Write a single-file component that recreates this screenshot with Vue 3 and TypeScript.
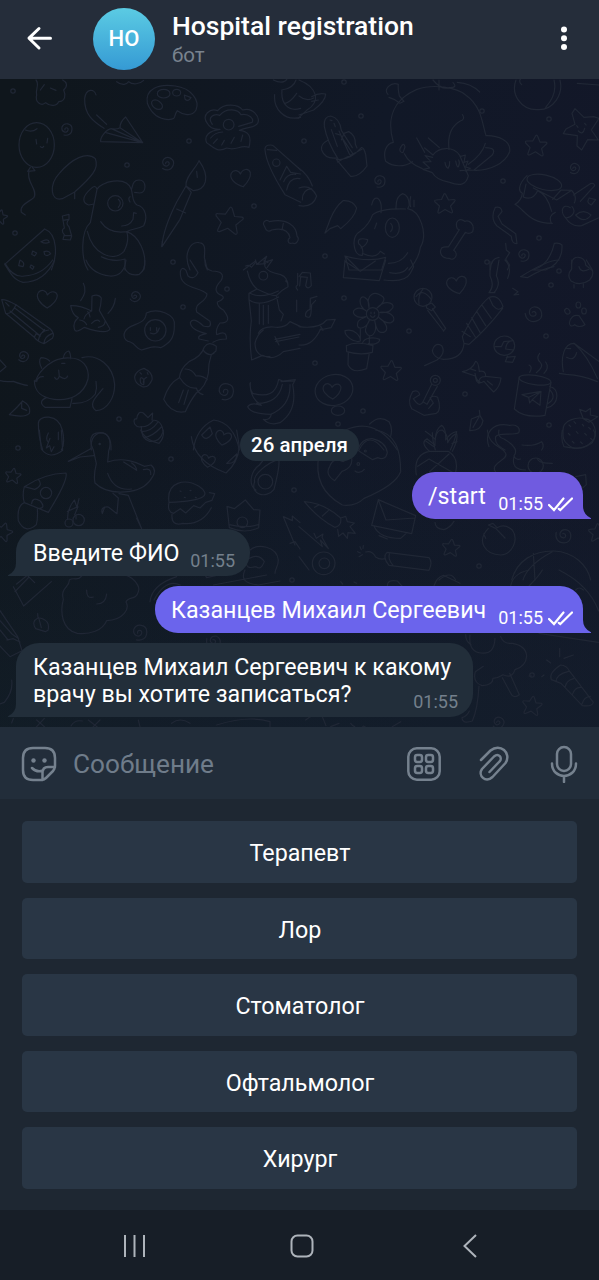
<script setup lang="ts">
interface Message {
  id: number
  lines: string[]
  time: string
  out: boolean
  kind: string
}

interface Mark {
  x: number
  y: number
  s: number
  r: number
}

const messages: Message[] = [
  { id: 1, lines: ['/start'], time: '01:55', out: true, kind: 'command' },
  { id: 2, lines: ['Введите ФИО'], time: '01:55', out: false, kind: 'prompt' },
  { id: 3, lines: ['Казанцев Михаил Сергеевич'], time: '01:55', out: true, kind: 'name' },
  { id: 4, lines: ['Казанцев Михаил Сергеевич к какому', 'врачу вы хотите записаться?'], time: '01:55', out: false, kind: 'question' },
]

const doctors: string[] = ['Терапевт', 'Лор', 'Стоматолог', 'Офтальмолог', 'Хирург']

const mark = (x: number, y: number, s = 1, r = 0): Mark => ({ x, y, s, r })

const stars: Mark[] = [
  mark(229, 221, 1.35, 10), mark(536, 146, 1.05, 5), mark(445, 204, 1, 0), mark(391, 371, 1, 5),
  mark(13, 476, 0.75, 10), mark(451, 548, 0.85, 8), mark(532, 706, 0.95, 10), mark(598, 533, 0.9, 0),
  mark(3, 532, 0.9, 20), mark(0, 217, 0.7, 15),
]
const hearts: Mark[] = [
  mark(241, 178, 1, -8), mark(47, 299, 1, 5), mark(457, 285, 1, -10), mark(332, 391, 0.9, 0),
  mark(223, 438, 0.8, 15), mark(208, 461, 0.7, 10),
]
const spirals: Mark[] = [
  mark(66, 129, 1, 0), mark(167, 163, 1.1, 20), mark(379, 181, 1, 0), mark(574, 168, 0.9, 20),
  mark(135, 296, 0.9, 40), mark(23, 356, 0.9, 30), mark(225, 391, 1.4, 0), mark(534, 313, 1.4, 70),
  mark(523, 255, 1, 0), mark(564, 535, 1.3, 90), mark(139, 632, 1.3, 0), mark(214, 641, 1.2, 90),
  mark(498, 722, 1, 30),
]
const dots: Mark[] = [
  mark(13, 91), mark(189, 141), mark(127, 165), mark(254, 206), mark(15, 233), mark(173, 262), mark(361, 116),
  mark(304, 141), mark(482, 111), mark(549, 119), mark(503, 181), mark(325, 256), mark(539, 238), mark(487, 262),
  mark(227, 289), mark(183, 307), mark(119, 419), mark(551, 285), mark(409, 331), mark(546, 336), mark(315, 363),
  mark(363, 411), mark(338, 424), mark(465, 394), mark(549, 425), mark(559, 271), mark(18, 448), mark(171, 459),
  mark(294, 490), mark(479, 566), mark(344, 82), mark(344, 298), mark(532, 675), mark(292, 580),
]
</script>

<template>
  <main class="screen">
    <header class="topbar">
      <svg class="back" viewBox="0 0 28 28" aria-hidden="true">
        <path d="M24.500 14.200H3.500M13 4.500 3 14.200 13 24" />
      </svg>
      <div class="avatar">НО</div>
      <div class="heading">
        <h1>Hospital registration</h1>
        <p>бот</p>
      </div>
      <svg class="more" viewBox="0 0 8 28" aria-hidden="true">
        <circle cx="4" cy="5.500" r="3" /><circle cx="4" cy="14.300" r="3" /><circle cx="4" cy="23" r="3" />
      </svg>
    </header>

    <section class="chat">
      <svg class="doodles" viewBox="0 79 599 648" aria-hidden="true">
        <defs>
          <path id="star" d="M-1-10Q0-11 1-9L3.500-4 9-4.500Q11-4 9.500-2.500L5.500 2 7.500 7.500Q7.500 9.500 5.500 8.500L0 5.500-5.500 9Q-7.500 9.500-7 7.500L-5.500 2-10-2Q-11-4-9-4L-3.500-4.500Z" />
          <path id="heart" d="M1 9C-7 5-12-1-9-6-6-10-1-8 0-4 3-9 9-9 10-4 10 2 5 6 1 9Z" />
          <path id="spiral" d="M-1 1C-2-2 3-2 2 1 1 5-5 3-4-2-2-7 6-6 6 0 6 5 2 7-2 6" />
        </defs>

        <g transform="translate(0 80) scale(.33333)">
          <path d="M108 0C120 14 105 28 110 45 104 66 124 80 137 68 152 80 171 78 176 65 196 64 198 45 191 30 205 17 200 6 188 0M121 30l12-16M151 24l17 7M350 5c18 14 30 8 36 0 12 10 33 8 45-4" />
          <ellipse cx="110" cy="195" rx="53" ry="67" />
          <path d="M91 262l-8 12 22-2-8-10M87 274C77 305 115 329 102 352 91 364 57 374 64 397l12 8M76 150q20 8 35-4M108 178l2 14M143 175l-2 14M121 200q6 6 10-1" />
          <path d="M288 45C284 26 258 24 254 55 252 104 280 125 312 145M290 105l30 28M302 185C300 170 320 148 334 146L428 188ZM334 146q16 3 26-3 0-18 17-32L428 188M360 143 428 188M318 158 428 188" />
          <path d="M442 70C434 26 477 10 526 18 575 25 600 62 588 90 575 112 548 104 532 92 518 111 532 117 505 119 469 117 450 91 442 70Z" />
          <ellipse cx="491" cy="41" rx="19" ry="13" /><ellipse cx="471" cy="74" rx="18" ry="12" transform="rotate(35 471 74)" /><ellipse cx="530" cy="38" rx="12" ry="10" /><path d="M553 45l20 8q-9 14-18 4Z" />
          <path d="M622 130C603 105 631 83 653 92 672 68 715 72 728 90 758 81 782 111 773 130 762 145 742 140 718 151 748 154 755 170 747 202 720 193 710 214 680 204 650 221 633 195 620 188 611 168 627 152 660 148 641 149 628 143 622 130Z" />
          <path d="M637 133C620 111 643 100 659 106 680 81 715 88 723 104 748 99 763 118 756 127L716 139M632 174q13-17 36-18M640 190l12-13M665 195l8-14M693 190l10-18M723 184l5-19" /><circle cx="686" cy="134" r="16" />
          <path d="M820 0C850 15 860 0 862-5M824 44C820 83 850 125 902 112M846 30C842 70 865 97 902 85M845 30Q880 26 888 0M855 70q18-5 35-30" />
          <path d="M187 356C149 366 148 312 178 280 216 236 260 213 286 236 298 265 276 290 224 336L187 356M224 336v20" />
          <path d="M291 328C301 306 378 285 394 328 400 350 396 366 411 375 437 381 444 413 431 437 414 448 395 446 380 455 346 460 319 451 302 425M291 328 271 428C241 455 243 537 264 570M380 455C415 466 444 520 431 570M291 328q-4-16-18-2c-30 26-25 43-7 49l16-3M394 330c5-16 5-30 23-30 23 0 24 38 2 39l-15-2M262 454C278 520 338 550 372 514 384 491 386 472 380 455M304 530Q340 548 375 537V570" />
          <circle cx="346" cy="370" r="23" /><path d="M355 358q12 10 0 24M390 350q-7 5 0 16M365 438q24 0 34-20l2-20 8 2M187 408l20-5v15q-12 12 0 22l8 28-4 12-22-2 4-14q-12-14 0-20ZM189 421l18-3M193 466l22 1" />
          <path d="M597 242C590 263 554 291 558 318L580 332C616 330 634 294 597 242M558 318 574 337 540 418 486 500Q488 450 530 366L558 318M530 387l27 12M485 500l2-17M590 274l2 18" />
          <path d="M795 210C793 194 813 192 822 199L902 270M795 210Q799 256 855 344L902 367M802 209l28 2M840 300l20-41 12 18 30 5M851 305q11-25 36-22M860 330q8-40 40-34" /><circle cx="829" cy="248" r="11" />
          <path d="M793 438C784 426 800 416 808 425 862 412 890 440 891 468 901 479 888 495 878 489 864 495 860 479 870 473Q863 440 815 450 801 461 793 438ZM850 430l-4 20" />
          <path d="M134 447C174 462 172 530 154 570M134 447 14 553l12 17M123 485q22-12 25 2-12 6-25-2M60 540q16 7 9 20l-13-3ZM98 513l12 6-6 9-9-5ZM132 515q14-5 20 6-10 10-18 3Z" />
          <path d="M570 570C548 522 571 483 598 488 617 491 615 508 613 532L622 570M730 570l37-27 4 10 29-24-8 19 26-9-17 24M770 553l27-2" />
        </g>

        <g transform="translate(299 80) scale(.33333)">
          <path d="M0 0Q41 16 49 45 55 71 23 91L-3 115M0 48Q22 66 44 54M38 50q22-13 42-8 0 21-36 48L0 105M38 64l20-4" />
          <path d="M76 139Q73 110 95 108 122 114 127 151L160 203M76 139Q84 185 118 238M97 149l18 50M120 153l31 69M127 170l35 52M127 180l8-20 14-5q21 10 20 38l5 11M88 180q-25 13-20 30 10 28 45 24M112 238q40 5 75-35 7-3 13 20l4 35q-24 34-49 31L112 238M115 246l74-38M151 222l5 7M93 120l6 2M105 130l4 10M110 161l13 4" />
          <path d="M283 187C261 112 286 58 352 29 402 10 474 22 500 45 549 80 549 130 561 167M267 43C251 27 277 5 298 13 296 30 300 38 301 48L315 64 303 70 285 58 270 52M283 187C260 191 252 218 260 244 283 263 319 260 340 245M303 206q11-23 15-5l-6 17q-11-1-9-12M316 221Q330 250 370 266M450 208C445 164 459 137 484 123 494 121 497 112 490 104M561 167C595 166 637 181 632 215 619 248 573 277 513 270L483 272M508 253Q551 222 559 190M560 203q35 1 19 23L526 269M402 0q25 31 50 23 25 0 10-15M420 0v30M475 7q42 3 67 29" />
          <path d="M353 174l24 43M388 174l33 29M377 204l25 21C418 202 462 196 482 226L508 287Q500 326 452 307 412 300 400 278l-28-10 20-4-20-18 24-1-18-18 23 5M438 247q2 14 9 18 6-7 5-20M470 243q4 20 8 17 6-11 1-20M483 230l16-5-4 22 12-4-7 18 14 4-15 8" />
          <path d="M651 0C635 42 665 92 718 89 763 90 794 43 783 0M668 14q-15-14 8-25M740 82Q776 41 765 0M835 10l65 5" />
          <path d="M828 86 855 112 884 110 900 115 877 150 898 180 866 179 848 210 834 198 835 167 793 161 801 147 828 133 819 100ZM833 137l4 5M857 130l4 5M838 153q14 14 19-8" />
          <ellipse cx="736" cy="307" rx="53" ry="22" transform="rotate(13 736 307)" />
          <path d="M684 287Q665 305 662 322q-2 13 8 18-2 21-22 33C679 391 690 430 760 430M681 312l-8 39Q701 363 716 332q29 12 42 62M703 324l70 36 45-29-32-1-25 28M818 331q17 18 8 38M823 345l51-34q11-4 13 6L844 364M814 383c-28-16-30 18-13 31 21-3 31-21 18-34M870 354l20 5-13 16q-17-7-6-21M800 414q18 28 48 23l50-23M830 405q24-20 46 0-20 28-46 0M757 430q-10-24 12-33" />
          <path d="M-2 263Q29 285 40 318M0 324q35-13 53 24-11 36-53 29M10 360q0-32 28-34M132 362q30-2 41 22-5 28-48 62l-9-9-23 9-15 13 16-42q15-37 38-55M218 375q4-23 18-20 14 10 10 43M291 385q-1-36 20-44 19 5 20 35l-5 10C363 392 388 461 364 502 360 534 343 555 330 570M221 404Q245 385 320 387M221 404Q210 434 185 453q-21 12-20 38 3 37 25 35 6-22-11-35-6-21 27-12 0 13-20 25M190 520q40 19 54-6M268 550q40 0 58-32M138 528q70 20 122 4l-12 38H150ZM138 528l42 42M244 514l12 8" /><ellipse cx="280" cy="443" rx="21" ry="29" /><path d="M275 430q11 11 0 25M233 429l-6 17M335 350q-4 20 0 30M345 360v20" />
          <path d="M475 446C465 422 484 413 497 424 511 419 528 432 521 455 512 462 505 461 499 457L464 511C480 520 468 546 450 535 431 535 418 521 428 504 435 499 446 501 448 501L481 449Z" />
          <path d="M589 382q18-4 20 13l-12 14 12 23 41 29 4 30q-16 1-17-22l-44-32q-20-23-4-55M766 490q15-3 23 5Q792 548 740 570H700Q750 559 766 490M620 490l2 20 10 8-12 19 12 18-7 15M574 570q1-35 26-38M818 550c0-26 42-24 42 5l18 15" />
        </g>

        <g transform="translate(0 260) scale(.33333)">
          <path d="M15 10Q40 54 73 48 126 45 158 0M15 10q22 51 54 57Q133 67 164 0M93 15l9 5-4 8-8-7ZM258 0Q275 42 330 48 372 50 378 0M374 25q12 25 44 18 20-15 16-43" />
          <path d="M5 119q11-2 43 15L151 207Q166 222 157 235L132 251Q112 244 103 232L17 160 5 119M17 160q18 4 31-26M17 128l10 10M30 153l91 75M43 143l91 69M103 232l5-11 11 5 15-18M115 241q4-28 31-31M132 249q2-20 25-29" />
          <path d="M212 137q28-1 63 16l1-45q19-8 28 6-1 22-6 37l32 56q-11 18-77-5-28 20-30 4-5-20 12-33-18-7-23-36M239 180q15 2 21 14M275 153q-20 9-23 24M263 155q5 5 7 16M250 70q13 24-8 52M346 115q-2 25-22 45M275 190q15-15 24-6M295 202q20-4 20-17" />
          <path d="M439 159C474 143 528 162 523 197 524 238 505 251 482 263 458 256 449 264 424 270 410 268 407 251 391 246 367 241 367 217 385 204 403 190 437 192 439 159Z" /><circle cx="466" cy="211" r="32" /><path d="M451 203v8M470 203v10M451 219q20 9 27-15" />
          <path d="M570 0 594 38q-12 24-30 10l-6-17q-13-13-17 4C537 88 600 79 621 102 619 130 581 126 590 156L630 184Q637 206 610 198 581 170 571 187 571 210 619 221 591 226 597 237L625 243M615 0Q613 29 636 33 679 34 663 62 635 91 660 104 683 113 652 126 650 139 671 151 700 189 660 189 646 207 650 224 681 209 679 237 655 237 639 247" />
          <path d="M613 261q14-19 36-2l-1 14-14 11Q625 310 625 340q-7 40-36 59Q572 420 556 455 514 463 491 418 505 370 538 353 541 325 567 305 604 290 613 261M609 270q17 21 33 10M555 327q21-1 33 21 19-3 34 11M540 354q20 33 49 30 4 15 20 20M550 390l-14 38M565 390l-13 43" />
          <path d="M106 364C118 330 158 290 210 294 247 294 269 320 264 357 252 404 210 424 163 418 122 412 104 395 103 362ZM125 325q-11-23-2-32 16 0 26 10M190 295q2-19 16-22 6 6 6 23M246 293C294 280 340 318 344 374 344 411 324 450 288 452 262 433 290 409 309 386M218 430Q265 432 286 402q6-18 2-38M139 413q-27 12-4 29h75l6-26M130 350q-17-1-20 15M164 352q8 13 14-3 20 14 25-1M178 349l-2-19M185 310h10" />
          <path d="M404 350q4-18 28-25 28 13 24 34-10 25-29 21-24-10-23-30M420 338l4 4M442 338l2 5M421 356q-2 18 10 18 4-20-8-21M440 352q-10 5-10 15M0 300l18 20-18 15M0 362q15 4 40 2 29 11 42 12M68 423q26 14 20 37-14 14-60 4 22-20 40-41M65 427v18l15 6M115 490C115 465 175 459 187 510 194 540 190 561 184 570M115 490q0 40 13 80M145 519q-10 20 0 27M175 516v23" />
          <path d="M737 18q12-5 17 4l12-14q2-6 0-8M742 33Q750 70 771 87L747 100V119Q752 160 754 183C747 230 750 262 755 300M771 87Q820 111 830 106 844 90 864 80 865 53 842 44 800 35 795 20l-3-20 12 8M750 100q35 17 85-7M747 119q30 24 89-8M778 132v60M790 136v58M805 136v54M830 110l8 40 12 13-7 20M775 220Q785 199 820 201 854 206 870 185L902 200M765 250Q770 225 790 210M755 300l33-14Q821 304 850 275l50-10M765 250q0 42 45 40M825 230l12 25M825 238l75-15M827 245l70-14M857 63l6 5" /><circle cx="790" cy="47" r="13" />
          <path d="M893 40v35q-10 5 0 15M890 120v35M750 370q-1 18 8 30 68 20 78-42l12 5 38-4-8 15Q894 452 840 488q-30 10-50-10 20 4 24-15-60 0-71-23 10-15 41-4-36-23-33-68M770 430q65 1 77-57M812 463q60-25 58-89M843 365l40-2" />
          <path d="M430 459q-16-9-20 18-12-2-6 15 8 12 20 8-2 35 25 44 30 3 40-28-2-36-33-36l2-21-14 14ZM425 500q18 2 35-18M424 515q30 0 50-29M432 533q25-3 52-32M580 570q8-65 61-90 60 7 77 90M605 525q12 22 32-4l-7-20-25 24" />
          <path d="M274 570q-5-42 26-52 35 0 33 52" />
        </g>

        <g transform="translate(299 260) scale(.33333)">
          <path d="M138 0 133 53 241 62 260 0M140 5l44 29 45-31M255 60q63 9 79-20l10-20-9-20M272 38q38 8 54-15M0 50l10-13 24 2 3 38q-11 13-17 0l5-25-20-2-3 28M34 140V115l20-6M34 115l-1 33q-16 6-13 21 15 9 16-11l2-24 12-13" />
          <circle cx="221" cy="162" r="19" /><path d="M210 144C200 100 227 90 253 112 259 119 249 134 233 145 262 114 297 133 276 149 268 161 242 157 242 157 285 153 294 182 276 188 259 192 244 177 238 171 276 199 265 220 245 217 230 214 229 187 227 182 239 225 210 238 202 219 193 209 208 187 212 179 202 209 170 212 176 190 175 176 202 174 202 169 172 179 153 157 169 148 184 137 203 154 203 154 174 136 181 104 197 112 210 118 211 137 210 144M216 156v5M226 156v5M214 167q8 10 14 0M184 208v35M211 229v22M184 243C166 250 136 228 138 212 167 203 185 230 184 243M191 248C196 233 224 230 242 238 242 251 222 255 208 251M142 257q30-15 80 0l-2 20q-35 10-77-2l-1-18M148 278 147 314q14 29 56 12l8-47" />
          <circle cx="372" cy="112" r="27" /><path d="M351 110q20-28 46 9M360 133q-4-29 13-47M381 136l17-7 11 12-11 11-15-8ZM386 151l48 62M400 146l40 59-7 8" />
          <path d="M490 230Q530 146 570 112M510 253Q560 210 611 145M570 112q30-10 42 28-12 17-30-3l-12-25M490 230l5 20 15 3M489 214l25 16M503 190l26 41M518 173l25 44M533 154l27 43M550 137l27 38M495 250q-4 48-62 48-29-4-33-25 7-28 28-16 14 22-14 43l-37 17M570 98q18-21 3-50V5M585 98q22-24 7-51L600 0M570 98h18M618 0q22 22 8 55M641 85l16 10-12 10 14-2" />
          <path d="M665 50Q745 0 780 0M665 50l20 3Q735 24 765 20M818 0v27q-16 18-2 36 28 17 56-3 18-20 2-40l-12-20M840 20q5 20 30 8M825 74v10M853 72v10M0 200q60 8 83-20l26-2-13 25-34 7M0 255q40 5 65-48M65 199l7 12" />
          <ellipse cx="838" cy="135" rx="7" ry="9" /><ellipse cx="805" cy="154" rx="7" ry="9" transform="rotate(-40 805 154)" /><ellipse cx="855" cy="153" rx="7" ry="9" /><path d="M811 189q5-27 29-22l18 27q-17 11-31 0-14 10-16-5" />
          <ellipse cx="616" cy="257" rx="31" ry="29" /><path d="M589 260h18l7-15 18-2M642 242q-20 0-22 25l24 3M622 292l27-3-8 18-22-2 7-17" />
          <path d="M490 335q30-5 40-31 8 0 11 30 20-3 19 15l46 5q-3 27-22 42-16-16-29-32-23 15-26-16l-39-13M528 340q3 21 16 27M558 350q-20 0-18 20M513 326l17 6M565 363l15 12" />
          <ellipse cx="708" cy="360" rx="48" ry="14" transform="rotate(8 708 360)" /><path d="M661 350 646 447q31 29 92 19L756 368M752 379C783 385 781 433 745 443M754 391q20 24-8 40M669 404l57-10-3 42-23-17-8 10-3-17-20-8M690 412l36-18-26 25M690 315q12 5 2 22M722 280q-12 15 2 27 12 13-12 31M740 306q12 17-5 34" />
          <path d="M793 335C784 290 796 250 825 250L899 304M781 340l20 3Q850 345 895 365M825 250Q865 285 895 355M803 292q22 13 30-14M803 265l12 1" />
          <ellipse cx="105" cy="390" rx="57" ry="46" transform="rotate(-12 105 390)" /><ellipse cx="117" cy="452" rx="20" ry="14" />
          <circle cx="409" cy="361" r="15" /><circle cx="409" cy="361" r="6" /><path d="M398 373 372 425 384 433 415 379M372 425q-10 20-29-9l19-12q-3-16-21-9-17 28-3 51l37 20 37-6q17-10 4-48-12-7-23 1l10 16-14 16" />
          <path d="M541 451l2 16-26 10-5 35q35 1 40-30l-9-15M540 471l-18 31M212 492q28-29 58-7 12 20 5 44M140 510Q230 470 295 570M180 570q30-60 75 0M400 518q0 25 9 52M379 514q12 8 30 24M409 538q0-30 19-42 14 10 12 44M440 540q14-22 33-25M473 515q-4 23-19 55M405 560l-25-17M459 550l15-5M570 560C555 520 580 486 632 496 655 491 665 506 659 518 640 528 600 515 590 530 586 550 600 560 618 570M669 555q34 5 59-10 9 13 0 25" />
          <path d="M792 512C790 480 835 470 857 476 886 479 900 519 880 548 862 560 831 576 808 555 789 541 792 525 792 512ZM853 476l-11-28 18 7 14-10v20l22 5-26 17-17-11" /><path d="M810 495l5 5M825 485l5 5M850 493l4 5M869 502l5 5M808 520l5 5M832 515l5 5M857 520l5 5M875 535l5 5M820 544l5 5M845 546l5 5" />
        </g>

        <g transform="translate(0 430) scale(.33333)">
          <path d="M118 0l6 57q26 34 64 4L184 0M150 25l-11 29 10-7 5 18 8-15M422 0q13 31 55 40 16-16 13-40M574 20q10 75 104 109Q714 98 718 50L710 0M680 100l30-28q0 30-30 28" />
          <path d="M280 60C261 21 280 7 299 9 324 5 337 33 326 63L323 96C368 80 412 96 433 109L453 105Q470 118 459 138 439 177 390 184 320 194 285 159 280 137 289 101ZM272 56 205 94 240 81 281 77M323 130Q342 184 395 177M371 96l39 25q-2-14-15-22M430 119q24-7 22 14M339 190l16 14-4 47-26-20q-25-2-18 20M314 231l-7 20M357 191l28 5 40 100M410 265l15 31" /><circle cx="299" cy="42" r="2" />
          <path d="M73 170Q132 131 198 129 205 150 145 247L73 218Q66 197 73 170M73 170l31 8q27-11 11-30M95 221q2-22 26-8 17 21-3 22M73 218Q50 228 55 272q21 42 54 12 5-17 3-48" /><circle cx="138" cy="189" r="17" />
          <circle cx="236" cy="270" r="17" /><circle cx="207" cy="279" r="12" /><path d="M203 268q-2-30 20-58l8 22 6-26M202 244l32-14-10 24M228 267v-10" />
          <path d="M507 217C498 153 557 145 597 169 630 193 626 212 507 217ZM507 218q-6 28 14 32l20-14 16 13 24-22 19 7 17-17 19-6 8-20-16-3M516 253q-3 37 33 27 57 6 85-47M540 183l3 1M570 181l3 1M586 202l3 1M553 202l3 1" />
          <path d="M681 229l22 7 33-26 25 29 19 1-4 53q-41 20-88 0ZM688 284q48 12 87 0" /><circle cx="727" cy="277" r="16" />
          <path d="M753 150q4-31 25-45l18-22M764 155C758 136 798 100 836 88 841 103 829 151 822 178 799 208 749 194 764 155M753 150q0 21 15 30" /><circle cx="796" cy="155" r="22" />
          <path d="M850 260l27 12v-14l23 20M850 260l35 85M870 340l15-5 15 22M750 360c23-20 80-12 85 30 0 20-10 25-10 40M740 390q34-24 53 5-10 27-25 15-35 10-28-20" />
        </g>

        <g transform="translate(299 430) scale(.33333)">
          <path d="M60 75q-20 100 70 150 40 5 65-20 95-40 110-80C305 60 290 10 230 0M92 110q10-30 40-15l25-17q8 34-28 46l-22 28q-30-18-15-42M176 60q12-36 44-34 40 9 45 42-5 25-29 15l-15 6q-30-18-45-29M168 123q14 11 28-5" /><circle cx="199" cy="63" r="3" /><circle cx="178" cy="102" r="4" />
          <path d="M392 64Q362 38 384 26l24 20Q407 0 430 0q18 15 16 38 14-24 27-27 5 18-13 53M352 135Q342 73 392 64h56q32 20 22 62M356 109l34-22 70 40M392 125l58-53M565 0C570 50 610 48 620 70 630 90 570 100 590 126M600 0q-5 23 15 27 48 28 30 50 4 14 20 10M645 80q-10 40 35 40M715 85c5 15 25 15 45 15M830 140l30-6 2 30-22 20M790 0q-5 30 5 50 53 12 78-10 24-20 10-40" /><circle cx="710" cy="107" r="23" />
          <path d="M16 215Q75 219 125 264 129 288 107 292 57 265 16 215M47 232l13-8M70 258l18-16M125 264l15-5 5 16 21 4-13 11 16 20-22-2-2 17-13-16-13 10-3-20" />
          <path d="M238 209 350 257 338 311 218 286ZM238 209 261 270 348 264M226 290q16 35 79 35l19-17M240 317l25 10M408 277q0 20 27 22 19-7 30-25" />
          <path d="M0 290l70 60-6-20 24 26-19-34 3-10-20 13-7-15M0 380l30 40" /><circle cx="74" cy="400" r="34" /><circle cx="76" cy="400" r="16" />
          <path d="M264 367 390 383Q402 396 390 421L270 406Q249 380 264 367M272 369q-7 18 10 37M260 386q-18 4-30-5-11-21-30-15M176 365l8 4M183 350l4 9M193 347l-1 8M180 380l10-6" />
          <path d="M568 295C530 335 560 374 605 375 640 374 660 328 640 300 615 278 597 292 594 293L582 280 568 285 590 295 618 324M560 325l-6-13" />
          <path d="M638 450C655 390 705 362 765 363 825 366 865 405 875 450M703 370l5 80M760 365q-75 40-88 85M420 450q35-30 50 0" />
        </g>

        <g transform="translate(0 570) scale(.33333)">
          <path d="M40 50 71 108 154 35M50 42l32-26 22 22M45 65l42-44M0 122 53 200 66 242 30 260-2 226M0 152l36 40 20 14M20 210l20-4 20 10M0 180l24 30" />
          <path d="M190 88C180 54 210 50 208 30 220 20 235 34 243 20 260 0 275 15 290 10 310 0 325 12 340 15 380 0 425 42 415 65 409 92 385 78 378 96 390 117 370 150 320 152 307 182 270 194 232 190 185 180 180 125 190 88ZM260 60q-1 28 20 21M320 72q-3 30-30 30M113 131l1 13Q93 154 107 176l29 9 8-4q8-29-24-37M116 143l8 30M450 95Q455 45 530 20M462 90q35-65 79-45M570 15l38-12 12 20 30-7M735 0q-20 40 40 45l65-12M640 45l160-30" />
          <path d="M35 330q5 35-22 67l-13 5M40 445l-5 14M110 450l23 20M133 445l-25 27M213 468q10-19 34-15M265 450l38 30M300 450l-35 35M415 450l6 25M515 460q25-20 55 0M650 465q95-30 160-10v18" />
        </g>

        <g transform="translate(299 570) scale(.33333)">
          <path d="M125 35l6 7M165 36l8 4M265 48q0-21 30-15l15 16M405 48q8-26 28-32l50 24M635 48C640 20 665 5 690 0M690 48q30-30 40-48M780 0q90 45 119 123M830 60q10-12 23 0M720 190 898 217" />
          <path d="M513 195q-5 50 33 54 40 6 42-44M500 194q0 20 16 30M605 200q8 23 35 20 41 7 43 38-2 31-35 41-9 28-36 15-15 10-30 11 0 21-33 22-29-10-20-42l24-16M610 323l23 43q10 23 28 8L632 310M540 348q-4 70-20 105-30 10-31-10 15-4 22-20" />
          <path d="M757 329Q748 309 785 285q18 1 27 19l71 93q-4 14-33 10l-64-67-29-11M771 335q0-22 38-31M798 352q4-21 26-26M820 374q8-24 26-22M849 402q6-22 25-23M782 235v25M755 279l-12-9M795 265l28-10M735 315l-7 5M690 318h8" />
          <path d="M20 450q35-28 50-10l11 27M95 470l25-10M155 460q6 8 12 10M185 480l8-12q15 7 17 17M280 470l25-15" />
        </g>

        <g class="marks">
          <use v-for="(m, i) in stars" :key="'s' + i" href="#star" :transform="`translate(${m.x} ${m.y}) rotate(${m.r}) scale(${m.s})`" :stroke-width="1.2 / m.s" />
          <use v-for="(m, i) in hearts" :key="'h' + i" href="#heart" :transform="`translate(${m.x} ${m.y}) rotate(${m.r}) scale(${m.s})`" :stroke-width="1.2 / m.s" />
          <use v-for="(m, i) in spirals" :key="'p' + i" href="#spiral" :transform="`translate(${m.x} ${m.y}) rotate(${m.r}) scale(${m.s})`" :stroke-width="1.2 / m.s" />
          <circle v-for="(m, i) in dots" :key="'d' + i" :cx="m.x" :cy="m.y" r="2.2" stroke-width="1.2" />
        </g>
      </svg>

      <div class="date">26 апреля</div>
      <article v-for="m in messages" :key="m.id" class="bubble" :class="[m.out ? 'out' : 'in', m.kind]">
        <p v-for="line in m.lines.slice(0, -1)" :key="line">{{ line }}</p>
        <div class="last">
          <p>{{ m.lines[m.lines.length - 1] }}</p>
          <span class="meta">
            <time>{{ m.time }}</time>
            <svg v-if="m.out" class="checks" viewBox="0 0 25 15" aria-hidden="true">
              <path d="M1 8 6 13 15.500 1.500M10.800 11.800 12.300 13 24 1.500" />
            </svg>
          </span>
        </div>
        <svg class="tail" viewBox="0 0 16 24" aria-hidden="true">
          <path d="M0 0H8V11Q8 19.500 16 23.300V24H0Z" />
        </svg>
      </article>
    </section>

    <section class="composer">
      <svg class="icon sticker" viewBox="0 0 36 36" aria-hidden="true">
        <path d="M34 20V12Q34 2 24 2H12Q2 2 2 12V24Q2 34 12 34H20Q23 34 25 32L32 25Q34 23 34 20ZM21.500 34V27Q21.500 21 27 21H34M11 22Q16 27 22 24.500" />
        <circle class="eye" cx="12.500" cy="14.500" r="2.200" /><circle class="eye" cx="23.500" cy="14.500" r="2.200" />
      </svg>
      <span class="placeholder">Сообщение</span>
      <svg class="icon grid" viewBox="0 0 34 34" aria-hidden="true">
        <rect x="1.300" y="1.300" width="31.400" height="31.400" rx="8.500" />
        <rect x="8" y="8" width="7" height="7" rx="2.200" /><rect x="19" y="8" width="7" height="7" rx="2.200" />
        <rect x="8" y="19" width="7" height="7" rx="2.200" /><rect x="19" y="19" width="7" height="7" rx="2.200" />
      </svg>
      <svg class="icon clip" viewBox="0 0 30 36" aria-hidden="true">
        <path d="M2 14 11.500 4.500C21-3.500 33 7 26.500 17L13.500 31C6.500 37.500-1.500 29.500 3 23L15 10.500C19.500 6.500 24 12 20.500 15.500L10.500 26" />
      </svg>
      <svg class="icon mic" viewBox="0 0 28 38" aria-hidden="true">
        <rect x="7" y="2" width="14" height="24" rx="7" />
        <path d="M2 18.500C2 35 26 35 26 18.500M14 31V37" />
      </svg>
    </section>

    <section class="keyboard">
      <button v-for="d in doctors" :key="d" type="button">{{ d }}</button>
    </section>

    <nav class="sysnav">
      <svg class="recents" viewBox="0 0 24 24" aria-hidden="true"><path d="M2 1V23M11.500 1V23M21 1V23" /></svg>
      <svg class="home" viewBox="0 0 24 24" aria-hidden="true"><rect x="1.500" y="1.500" width="21" height="21" rx="6" /></svg>
      <svg class="prev" viewBox="0 0 24 24" aria-hidden="true"><path d="M19 1 7.500 12 19 23" /></svg>
    </nav>
  </main>
</template>

<style>
html,
body {
  margin: 0;
  background: #171e27;
}
</style>

<style scoped>
.screen {
  width: 599px;
  height: 1280px;
  display: flex;
  flex-direction: column;
  overflow: hidden;
  font-family: Roboto, "Noto Sans", sans-serif;
  color: #fff;
}
svg {
  display: block;
  fill: none;
  flex: none;
}
.topbar {
  flex: none;
  height: 79px;
  box-sizing: border-box;
  display: flex;
  align-items: flex-start;
  padding: 8px 31px 0 26px;
  background: #252d3a;
}
.back {
  width: 28px;
  height: 28px;
  margin-top: 16px;
  stroke: #fff;
  stroke-width: 3;
  stroke-linecap: round;
  stroke-linejoin: round;
}
.avatar {
  width: 62px;
  height: 62px;
  margin-left: 39px;
  border-radius: 50%;
  background: linear-gradient(#5bcbe3, #359ad4);
  font-size: 22px;
  font-weight: 500;
  line-height: 62px;
  text-align: center;
}
.heading {
  flex: 1;
  margin-left: 17px;
}
h1 {
  margin: 2px 0 0;
  font-size: 26.5px;
  font-weight: 500;
  line-height: 32px;
}
.heading p {
  margin: 0;
  font-size: 20.5px;
  line-height: 26px;
  color: #79838f;
}
.more {
  width: 8px;
  height: 28px;
  margin-top: 16px;
  fill: #fff;
}
.chat {
  flex: none;
  height: 648px;
  box-sizing: border-box;
  position: relative;
  display: flex;
  flex-direction: column;
  justify-content: flex-end;
  align-items: flex-start;
  gap: 10px;
  padding: 0 16px 10px;
  background: linear-gradient(180deg, transparent 55%, rgba(20, 33, 44, 0.55)), linear-gradient(100deg, #0f161c 5%, #111827 55%, #131729);
}
.doodles {
  position: absolute;
  inset: 0;
  width: 599px;
  height: 648px;
  stroke: #202735;
  stroke-width: 3.6;
  stroke-linecap: round;
  stroke-linejoin: round;
}
.date {
  position: relative;
  align-self: center;
  height: 32px;
  padding: 0 11px;
  margin-bottom: 1px;
  border-radius: 16px;
  background: #212d39;
  font-size: 20.5px;
  font-weight: 500;
  line-height: 32px;
}
.bubble {
  position: relative;
  box-sizing: border-box;
  min-height: 47px;
  display: flex;
  flex-direction: column;
  align-items: flex-start;
  padding: 11px 15px 9px 17px;
  border-radius: 23px;
  background: #222e3a;
}
.bubble p {
  margin: 0;
  font-size: 23.25px;
  line-height: 27px;
  white-space: pre;
}
.last {
  align-self: stretch;
  display: flex;
  justify-content: space-between;
  align-items: flex-end;
}
.in {
  border-bottom-left-radius: 0;
}
.out {
  align-self: flex-end;
  border-bottom-right-radius: 0;
  padding: 11px 10px 9px 16px;
}
.command {
  width: 171px;
  background: #705be0;
}
.name {
  width: 428px;
  background: #6b64ec;
}
.prompt {
  width: 234px;
}
.question {
  width: 457px;
  height: 74px;
}
.meta {
  display: flex;
  align-items: center;
  gap: 5px;
  height: 20px;
  margin-bottom: -4px;
  font-size: 18px;
  line-height: 20px;
  color: #74808c;
}
.out .meta {
  color: #fff;
}
.checks {
  width: 25px;
  height: 15px;
  stroke: #fff;
  stroke-width: 2.2;
  stroke-linecap: round;
}
.tail {
  position: absolute;
  bottom: 0;
  width: 16px;
  height: 24px;
}
.out .tail {
  right: -8px;
  fill: #705be0;
}
.name .tail {
  fill: #6b64ec;
}
.in .tail {
  left: -8px;
  transform: scaleX(-1);
  fill: #222e3a;
}
.composer {
  flex: none;
  height: 72px;
  box-sizing: border-box;
  display: flex;
  align-items: center;
  padding: 1px 21px 0;
  background: #222d3a;
}
.icon {
  stroke: #75818e;
  stroke-width: 2.5;
  stroke-linecap: round;
  stroke-linejoin: round;
}
.sticker {
  width: 36px;
  height: 36px;
}
.eye {
  fill: #75818e;
  stroke: none;
}
.placeholder {
  flex: 1;
  margin-left: 16px;
  font-size: 26.2px;
  line-height: 32px;
  color: #6f7c8a;
}
.grid {
  width: 34px;
  height: 34px;
}
.clip {
  width: 30px;
  height: 36px;
  margin-left: 38px;
}
.mic {
  width: 28px;
  height: 38px;
  margin-left: 41px;
}
.keyboard {
  flex: none;
  height: 411px;
  box-sizing: border-box;
  display: flex;
  flex-direction: column;
  gap: 15px;
  padding: 22px;
  background: #1e2732;
}
button {
  flex: none;
  height: 61.5px;
  padding: 3px 0 0 1px;
  border: 0;
  border-radius: 5px;
  background: #293645;
  color: #fff;
  font: 400 23.25px/58px Roboto, "Noto Sans", sans-serif;
}
.sysnav {
  flex: 1;
  display: flex;
  align-items: center;
  padding: 2px 118px 0 123px;
  justify-content: space-between;
  background: #171e27;
  stroke: #aeb4bb;
  stroke-width: 2;
}
.sysnav svg {
  width: 24px;
  height: 24px;
}
</style>
